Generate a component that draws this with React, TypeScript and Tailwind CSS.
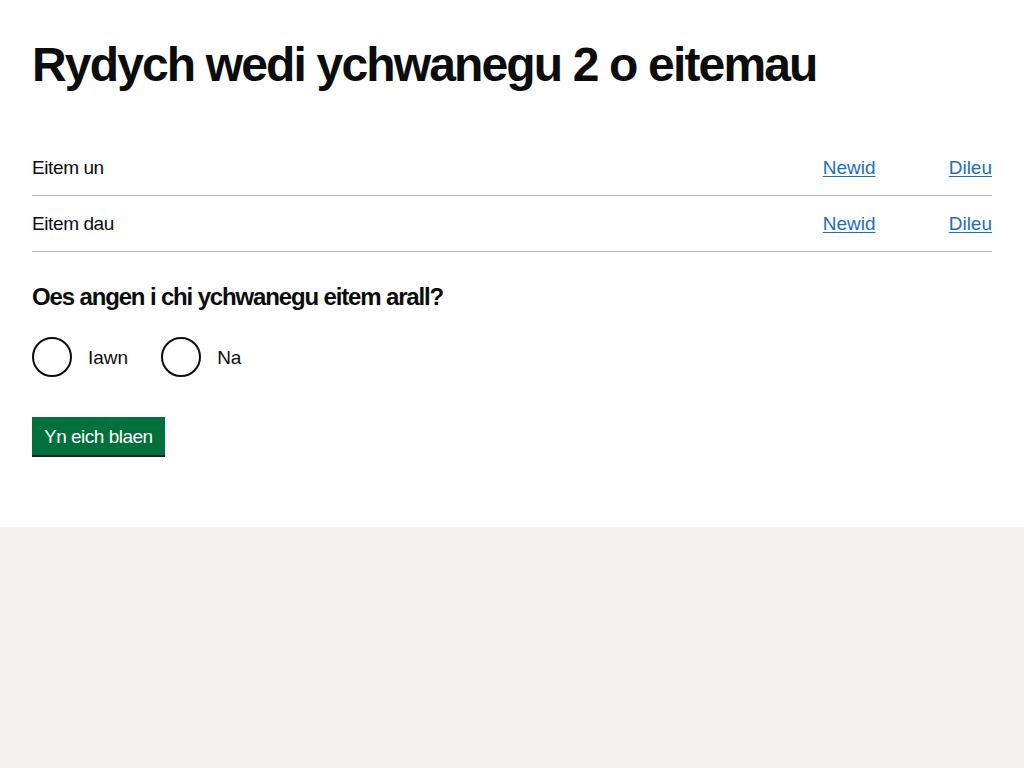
export default function App() {
  const items = ["Eitem un", "Eitem dau"];
  return (
    <div className="min-h-[768px] flex flex-col bg-[#f3f2f1] text-[#0b0c0c] font-['Liberation_Sans',Arial,sans-serif]">
      <main className="bg-white px-8 pt-10 h-[527px]">
        <h1 className="text-[48px] leading-[50px] font-bold mb-[50px] tracking-[-1.85px]">
          Rydych wedi ychwanegu 2 o eitemau
        </h1>

        <dl className="mb-[30px]">
          {items.map((item) => (
            <div key={item} className="flex items-center border-b border-[#b1b4b6] py-[15px]">
              <dt className="flex-1 text-[19px] leading-[25px] tracking-[-0.4px]">{item}</dt>
              <dd className="w-[126px] text-[19px] leading-[25px]">
                <a href="#" className="text-[#1d70b8] underline underline-offset-2">Newid</a>
              </dd>
              <dd className="text-[19px] leading-[25px]">
                <a href="#" className="text-[#1d70b8] underline underline-offset-2">Dileu</a>
              </dd>
            </div>
          ))}
        </dl>

        <fieldset className="mb-[40px]">
          <legend className="text-[24px] leading-[30px] font-bold mb-[25px] tracking-[-1.15px]">
            Oes angen i chi ychwanegu eitem arall?
          </legend>
          <div className="flex gap-[18px]">
            {["Iawn", "Na"].map((label) => (
              <label key={label} className="flex items-center cursor-pointer">
                <span className="w-10 h-10 rounded-full border-2 border-[#0b0c0c] bg-white" />
                <span className="pl-4 pr-[15px] text-[19px] leading-[25px]">{label}</span>
              </label>
            ))}
          </div>
        </fieldset>

        <button className="bg-[#00703c] text-white text-[19px] leading-[19px] tracking-[-0.5px] px-3 pt-[10px] pb-[9px] shadow-[0_2px_0_#002d18] mb-[2px]">
          Yn eich blaen
        </button>
      </main>
      <footer className="flex-1 bg-[#f3f2f1]" />
    </div>
  );
}
